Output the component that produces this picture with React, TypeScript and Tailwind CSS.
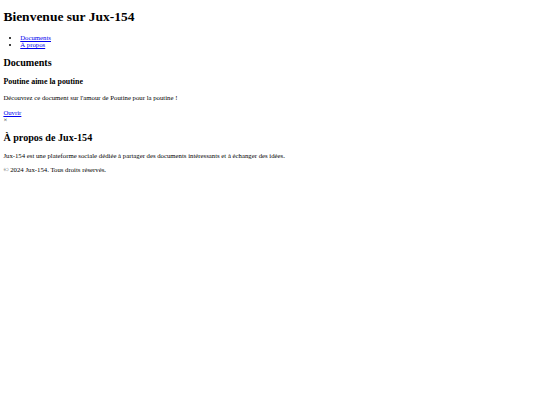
export default function App() {
  return (
    <div className="min-h-[405px] bg-white px-[3.375px] font-['Liberation_Serif','Times_New_Roman',serif] text-[6.75px] leading-[7.6px] text-black">
      <header>
        <h1 className="my-[9.05px] text-[13.5px] leading-[15.7px] font-bold">Bienvenue sur Jux-154</h1>
        <nav>
          <ul className="my-[6.75px] list-disc pl-[16.875px]">
            <li>
              <a href="#documents" className="text-[#0000ee] underline">Documents</a>
            </li>
            <li>
              <a href="#apropos" className="text-[#0000ee] underline">À propos</a>
            </li>
          </ul>
        </nav>
      </header>

      <main>
        <section id="documents">
          <h2 className="my-[8.4px] text-[10.125px] leading-[11.4px] font-bold">Documents</h2>
          <div>
            <h3 className="my-[7.9px] text-[7.9px] leading-[9.2px] font-bold">Poutine aime la poutine</h3>
            <p className="my-[6.75px]">Découvrez ce document sur l'amour de Poutine pour la poutine !</p>
            <a href="#" className="text-[#0000ee] underline">Ouvrir</a>
            <div>
              <span>×</span>
            </div>
          </div>
        </section>

        <section id="apropos">
          <h2 className="my-[8.4px] text-[10.125px] leading-[11.4px] font-bold">À propos de Jux-154</h2>
          <p className="my-[6.75px]">
            Jux-154 est une plateforme sociale dédiée à partager des documents intéressants et à échanger des idées.
          </p>
        </section>
      </main>

      <footer>
        <p className="my-[6.75px]">© 2024 Jux-154. Tous droits réservés.</p>
      </footer>
    </div>
  );
}
